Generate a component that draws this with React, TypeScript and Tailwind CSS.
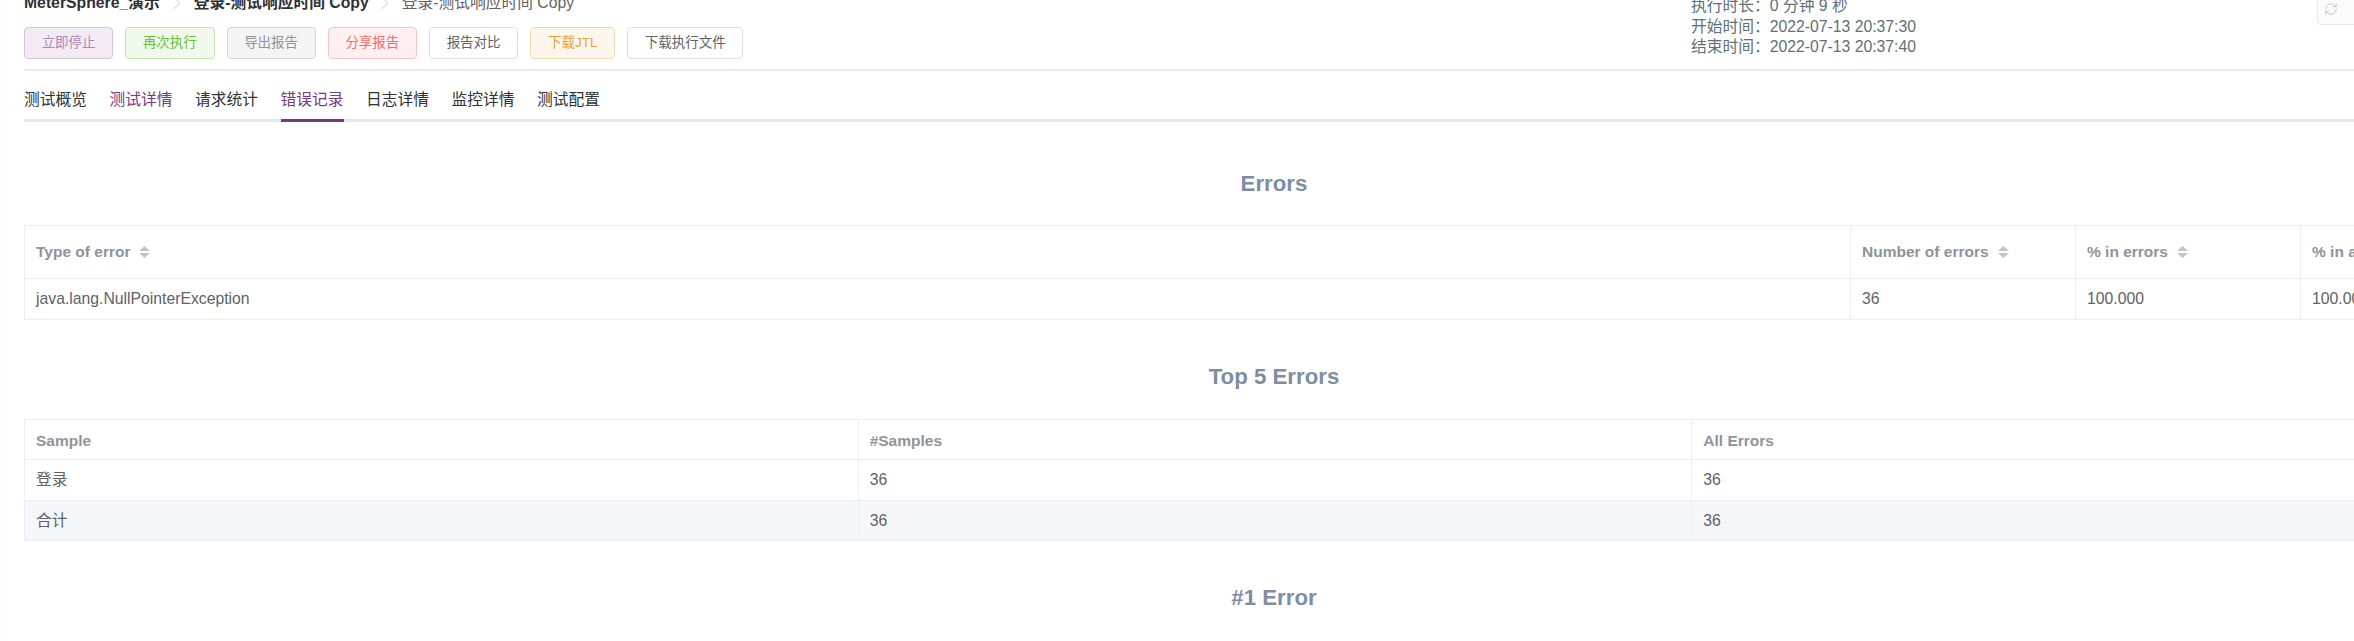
import React from 'react';
import { ChevronRight, RefreshCw } from 'lucide-react';

const buttons = [
  { label: '立即停止', cls: 'w-[89.25px] bg-[#f2ebf3] border-[#d7c3db] text-[#ae88b7]' },
  { label: '再次执行', cls: 'w-[89.25px] bg-[#f0f9eb] border-[#c2e7b0] text-[#67c23a]' },
  { label: '导出报告', cls: 'w-[89.25px] bg-[#f4f4f5] border-[#d3d4d6] text-[#909399]' },
  { label: '分享报告', cls: 'w-[89.25px] bg-[#fef0f0] border-[#fbc4c4] text-[#f56c6c]' },
  { label: '报告对比', cls: 'w-[89.25px] bg-white border-[#dcdfe6] text-[#606266]' },
  { label: '下载JTL', cls: 'w-[85px] bg-[#fdf6ec] border-[#f5dab1] text-[#e6a23c]' },
  { label: '下载执行文件', cls: 'w-[116px] bg-white border-[#dcdfe6] text-[#606266]' },
];

const tabs = ['测试概览', '测试详情', '请求统计', '错误记录', '日志详情', '监控详情', '测试配置'];

const SortIcon = () => (
  <svg width="11" height="14" viewBox="0 0 11 14" className="ml-[9px] shrink-0">
    <path d="M5.5 1 L11 6 L0 6 Z" fill="#c0c4cc" />
    <path d="M0 8 L11 8 L5.5 13 Z" fill="#c0c4cc" />
  </svg>
);

const SectionTitle = ({ text, className }: { text: string; className: string }) => (
  <h3 className={`h-10 pl-[2px] text-center text-[22.25px] leading-10 font-bold text-[#7f8da3] ${className}`}>{text}</h3>
);

export default function App() {
  return (
    <div className="h-[641px] w-[2354px] overflow-hidden bg-gradient-to-r from-[#fefefe] to-[#f1f1f1] font-['Liberation_Sans','Noto_Sans_CJK_SC',sans-serif] text-[15.75px] text-[#606266]">
      <div className="ml-3 w-[2510px] bg-white pl-3 pt-0">
        {/* report header */}
        <div className="-mt-[9px] flex h-[80px] border-b-2 border-[#e8e8f0]">
          <div className="w-[1667px]">
            <div className="flex h-6 items-center text-[15.75px] leading-6">
              <span className="font-bold text-[#303133]">MeterSphere_演示</span>
              <ChevronRight strokeWidth={1} className="mx-[6px] h-[22px] w-[22px] text-[#c0c4cc]" />
              <span className="font-bold text-[#303133]">登录-测试响应时间 Copy</span>
              <ChevronRight strokeWidth={1} className="mx-[5.5px] h-[22px] w-[22px] text-[#c0c4cc]" />
              <span>登录-测试响应时间 Copy</span>
            </div>
            <div className="mt-3 flex gap-3">
              {buttons.map(b => (
                <div
                  key={b.label}
                  className={`flex h-8 items-center justify-center rounded-[4px] border text-[13.5px] ${b.cls}`}
                >
                  {b.label}
                </div>
              ))}
            </div>
          </div>
          <div className="w-[626px] pt-[5px] text-[15.75px] leading-[20.5px] text-[#5f7076]">
            <div>执行时长：0 分钟 9 秒</div>
            <div>开始时间：2022-07-13 20:37:30</div>
            <div>结束时间：2022-07-13 20:37:40</div>
          </div>
          <div className="-mt-2 flex h-[42px] w-[120px] items-end rounded-[4px] border border-[#e4e7ed] bg-[#fbfbfc] pb-[8px] pl-[6px]">
            <RefreshCw strokeWidth={1.5} className="h-[14px] w-[14px] text-[#c0c4cc]" />
          </div>
        </div>

        {/* tabs */}
        <div className="flex h-[51px] gap-[22.5px] border-b-[3px] border-[#e4e7ed] pt-[18px] text-[15.75px] leading-[21px] text-[#303133]">
          {tabs.map((t, idx) => (
            <div
              key={t}
              className={`relative w-[63px] ${idx === 1 || idx === 3 ? 'text-[#783887]' : ''}`}
            >
              {t}
              {idx === 3 && <div className="absolute -bottom-[3px] left-0 h-[3px] w-full bg-[#783887]" />}
            </div>
          ))}
        </div>

        <SectionTitle text="Errors" className="mt-[42px] mb-[21px]" />
        <table className="w-[2498px] table-fixed border-collapse border border-[#ebeef5]">
          <colgroup>
            <col className="w-[1826px]" />
            <col className="w-[225px]" />
            <col className="w-[225px]" />
            <col />
          </colgroup>
          <thead>
            <tr className="h-[53px] text-[15.5px] font-bold text-[#909399]">
              {['Type of error', 'Number of errors', '% in errors', '% in all samples'].map(h => (
                <th key={h} className="border border-[#ebeef5] px-[11px] text-left font-bold">
                  <div className="flex items-center">
                    {h}
                    <SortIcon />
                  </div>
                </th>
              ))}
            </tr>
          </thead>
          <tbody>
            <tr className="h-[41px]">
              {['java.lang.NullPointerException', '36', '100.000', '100.000'].map((c, i) => (
                <td key={i} className="border border-[#ebeef5] px-[11px]">{c}</td>
              ))}
            </tr>
          </tbody>
        </table>

        <SectionTitle text="Top 5 Errors" className="mt-[37px] mb-[22px]" />
        <table className="w-[2502px] table-fixed border-collapse border border-[#ebeef5]">
          <thead>
            <tr className="h-10 text-[15.5px] font-bold text-[#909399]">
              {['Sample', '#Samples', 'All Errors'].map(h => (
                <th key={h} className="border border-[#ebeef5] px-[11px] pt-[2px] text-left font-bold">{h}</th>
              ))}
            </tr>
          </thead>
          <tbody>
            <tr className="h-[41px]">
              {['登录', '36', '36'].map((c, i) => (
                <td key={i} className="border border-[#ebeef5] px-[11px]">{c}</td>
              ))}
            </tr>
            <tr className="h-10 bg-[#f5f7fa]">
              {['合计', '36', '36'].map((c, i) => (
                <td key={i} className="border border-[#ebeef5] px-[11px]">{c}</td>
              ))}
            </tr>
          </tbody>
        </table>

        <SectionTitle text="#1 Error" className="mt-[37px] mb-[23px]" />
        <div className="h-10 border-t border-[#ebeef5]" />
      </div>
    </div>
  );
}
